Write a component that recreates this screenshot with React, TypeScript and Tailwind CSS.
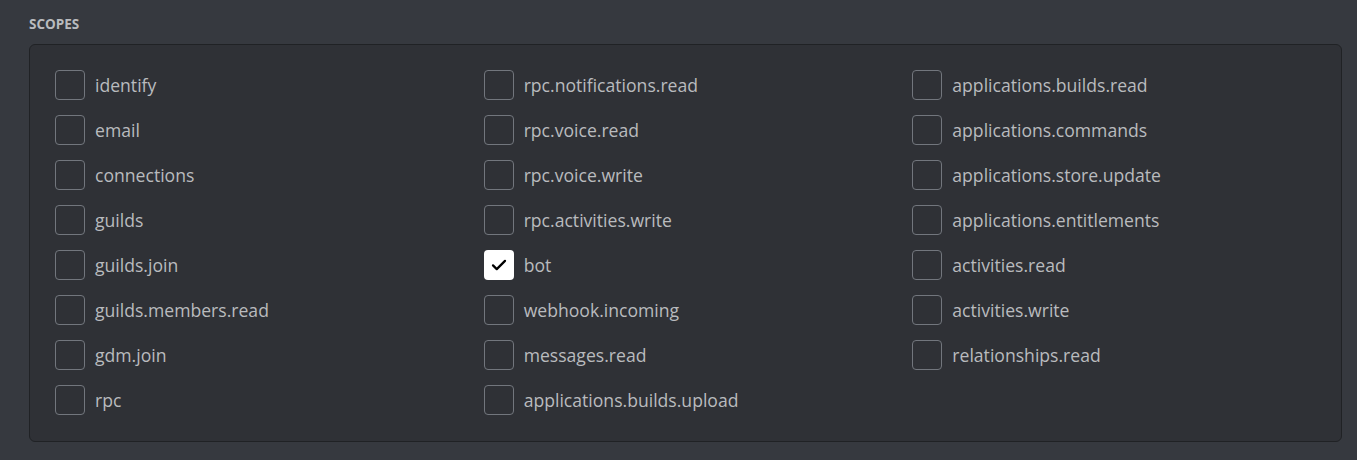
import React from 'react';

const columns: string[][] = [
  ['identify', 'email', 'connections', 'guilds', 'guilds.join', 'guilds.members.read', 'gdm.join', 'rpc'],
  [
    'rpc.notifications.read',
    'rpc.voice.read',
    'rpc.voice.write',
    'rpc.activities.write',
    'bot',
    'webhook.incoming',
    'messages.read',
    'applications.builds.upload',
  ],
  [
    'applications.builds.read',
    'applications.commands',
    'applications.store.update',
    'applications.entitlements',
    'activities.read',
    'activities.write',
    'relationships.read',
  ],
];

const Scope: React.FC<{ name: string; checked: boolean }> = ({ name, checked }) => (
  <label className="flex items-center h-[30px] cursor-pointer">
    {checked ? (
      <span className="flex items-center justify-center w-[30px] h-[30px] rounded-[4px] bg-white">
        <svg width="18" height="18" viewBox="0 0 24 24" fill="none">
          <path d="M4 12.5l5 5L20 6.5" stroke="#000" strokeWidth="3" strokeLinecap="round" strokeLinejoin="round" />
        </svg>
      </span>
    ) : (
      <span className="w-[30px] h-[30px] rounded-[4px] border border-[#72767d]" />
    )}
    <span className="ml-[10px] text-[17.6px] text-[#b9bbbe]">{name}</span>
  </label>
);

export default function App() {
  return (
    <div className="min-h-[460px] bg-[#36393f] px-[29px] pt-[16px] font-['Open_Sans',sans-serif]">
      <h2 className="text-[13.5px] font-bold uppercase text-[#b9bbbe] leading-[16px]">Scopes</h2>
      <div className="mt-[12px] w-[1313px] rounded-[6px] border border-[#202225] bg-[#2f3136] pl-[25px] pt-[25px] pb-[26px] grid grid-cols-3">
        {columns.map((col, i) => (
          <div key={i} className="flex flex-col gap-[15px]">
            {col.map((s) => (
              <Scope key={s} name={s} checked={s === 'bot'} />
            ))}
          </div>
        ))}
      </div>
    </div>
  );
}
